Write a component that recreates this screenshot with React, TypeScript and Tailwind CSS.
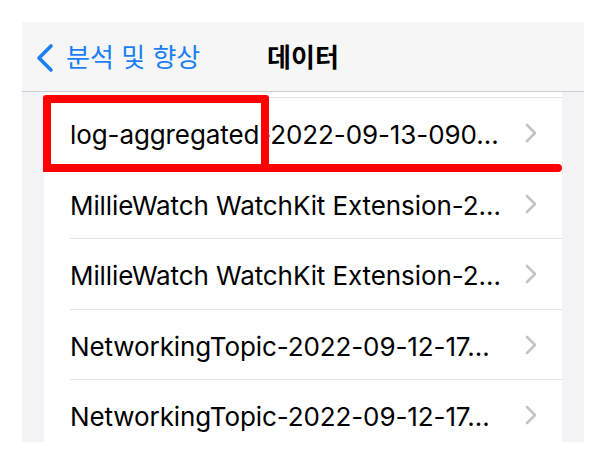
import React from "react";

const rows = [
  "log-aggregated-2022-09-13-090…",
  "MillieWatch WatchKit Extension-2…",
  "MillieWatch WatchKit Extension-2…",
  "NetworkingTopic-2022-09-12-17…",
  "NetworkingTopic-2022-09-12-17…",
];

const Chevron = () => (
  <svg width="14" height="22" viewBox="0 0 14 22" fill="none">
    <polyline points="3,3 11,11 3,19" stroke="#c4c4c7" strokeWidth="2.6" strokeLinecap="round" strokeLinejoin="round" />
  </svg>
);

export default function App() {
  return (
    <div className="w-[609px] h-[468px] bg-white pt-[22px] pl-[22px]" style={{ fontFamily: "Inter, 'Noto Sans CJK KR', sans-serif" }}>
      <div className="relative w-[562px] h-[420px] bg-[#f2f2f7] overflow-hidden">
        {/* Nav bar */}
        <div className="relative h-[70px] bg-[#f6f6f6] border-b border-[#cfcfd2] flex items-center">
          <div className="flex items-center pl-[14px] pt-[2px] text-[#1a7ff5]">
            <svg width="18" height="30" viewBox="0 0 18 30" fill="none">
              <polyline points="15,3 3,15 15,27" stroke="#1a7ff5" strokeWidth="3.6" strokeLinecap="round" strokeLinejoin="round" />
            </svg>
            <span className="ml-[12px] text-[26px]">분석 및 향상</span>
          </div>
          <div className="absolute inset-0 pt-[2px] flex items-center justify-center text-[26px] font-bold text-black">
            데이터
          </div>
        </div>
        {/* List */}
        <div className="mx-[22px] bg-white">
          <div className="h-[5px]" />
          <div className="h-px bg-[#e2e2e5] ml-[26px]" />
          {rows.map((r, i) => (
            <div key={i} className="h-[70.5px] flex items-center pl-[26px] pr-[24px] relative">
              <span className="flex-1 pt-[3px] text-[26px] text-black whitespace-nowrap tracking-[-0.1px]">{r}</span>
              <Chevron />
              {i < rows.length - 1 && (
                <div className="absolute bottom-0 left-[26px] right-0 h-px bg-[#e2e2e5]" />
              )}
            </div>
          ))}
        </div>
        {/* Red annotation */}
        <div className="absolute left-[21px] top-[73px] w-[226px] h-[77px] border-[8px] border-[#ff0000] rounded-[3px]" />
        <div className="absolute left-[21px] top-[142px] w-[519px] h-[8px] bg-[#ff0000] rounded-r-full" />
      </div>
    </div>
  );
}
